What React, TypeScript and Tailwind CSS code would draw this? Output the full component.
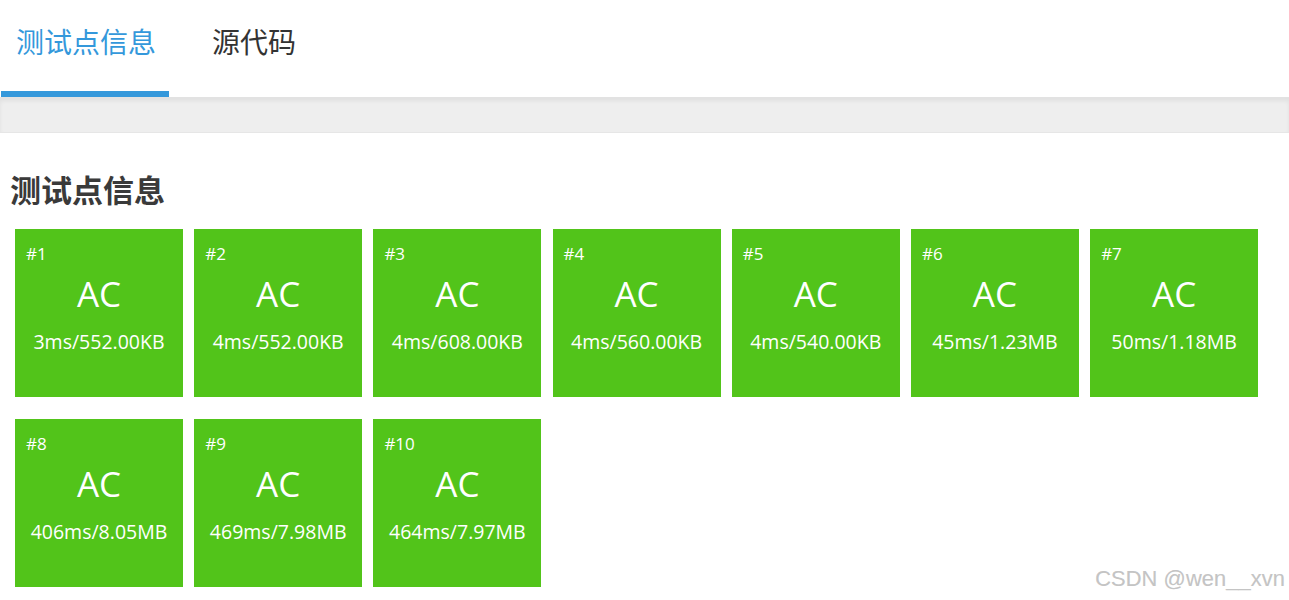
import React from "react";

const cases = [
  "3ms/552.00KB",
  "4ms/552.00KB",
  "4ms/608.00KB",
  "4ms/560.00KB",
  "4ms/540.00KB",
  "45ms/1.23MB",
  "50ms/1.18MB",
  "406ms/8.05MB",
  "469ms/7.98MB",
  "464ms/7.97MB",
];

export default function App() {
  return (
    <div
      className="relative w-[1289px] h-[600px] overflow-hidden bg-white"
      style={{ fontFamily: '"Open Sans", "Noto Sans CJK SC", sans-serif' }}
    >
      {/* tabs */}
      <div className="flex h-[97px] bg-white">
        <div className="ml-[1px] w-[168px] h-[97px] flex flex-col border-b-[6px] border-[#3498db]">
          <div
            className="pt-[23px] pl-[15px] text-[28px] leading-[36px] text-[#3498db]"
            style={{ fontFamily: '"Noto Sans CJK SC", sans-serif' }}
          >
            测试点信息
          </div>
        </div>
        <div
          className="ml-[43px] pt-[23px] text-[28px] leading-[36px] text-[#333333]"
          style={{ fontFamily: '"Noto Sans CJK SC", sans-serif' }}
        >
          源代码
        </div>
      </div>
      <div className="h-[36px] bg-[#eeeeee] border-t border-[#e2e2e2] shadow-[inset_0_3px_4px_rgba(0,0,0,0.06)] border-b border-b-[#e6e6e6]" />

      {/* content */}
      <div className="px-[10px]">
        <div
          className="mt-[38px] text-[31px] leading-[36px] font-bold text-[#3a3a3a]"
          style={{ fontFamily: '"Noto Sans CJK SC", sans-serif' }}
        >
          测试点信息
        </div>
        <div className="mt-[22px] ml-[5px] flex flex-wrap gap-x-[11.2px] gap-y-[22px] w-[1260px]">
          {cases.map((c, i) => (
            <div key={i} className="w-[168px] h-[168px] bg-[#52c41a] text-white flex flex-col">
              <div className="pt-[16px] pl-[11px] text-[17px] leading-none">#{i + 1}</div>
              <div className="mt-[14px] text-center text-[35px] leading-none">AC</div>
              <div className="mt-[21px] text-center text-[19.5px] leading-none">{c}</div>
            </div>
          ))}
        </div>
      </div>

      <div
        className="absolute right-[4px] bottom-[10px] text-[22px] leading-none text-[#c4c4c4]"
        style={{ fontFamily: '"Liberation Sans", Arial, sans-serif', textShadow: "1px 1px 1px rgba(255,255,255,0.9), -0.5px -0.5px 0.5px rgba(0,0,0,0.1)" }}
      >
        CSDN @wen__xvn
      </div>
    </div>
  );
}
